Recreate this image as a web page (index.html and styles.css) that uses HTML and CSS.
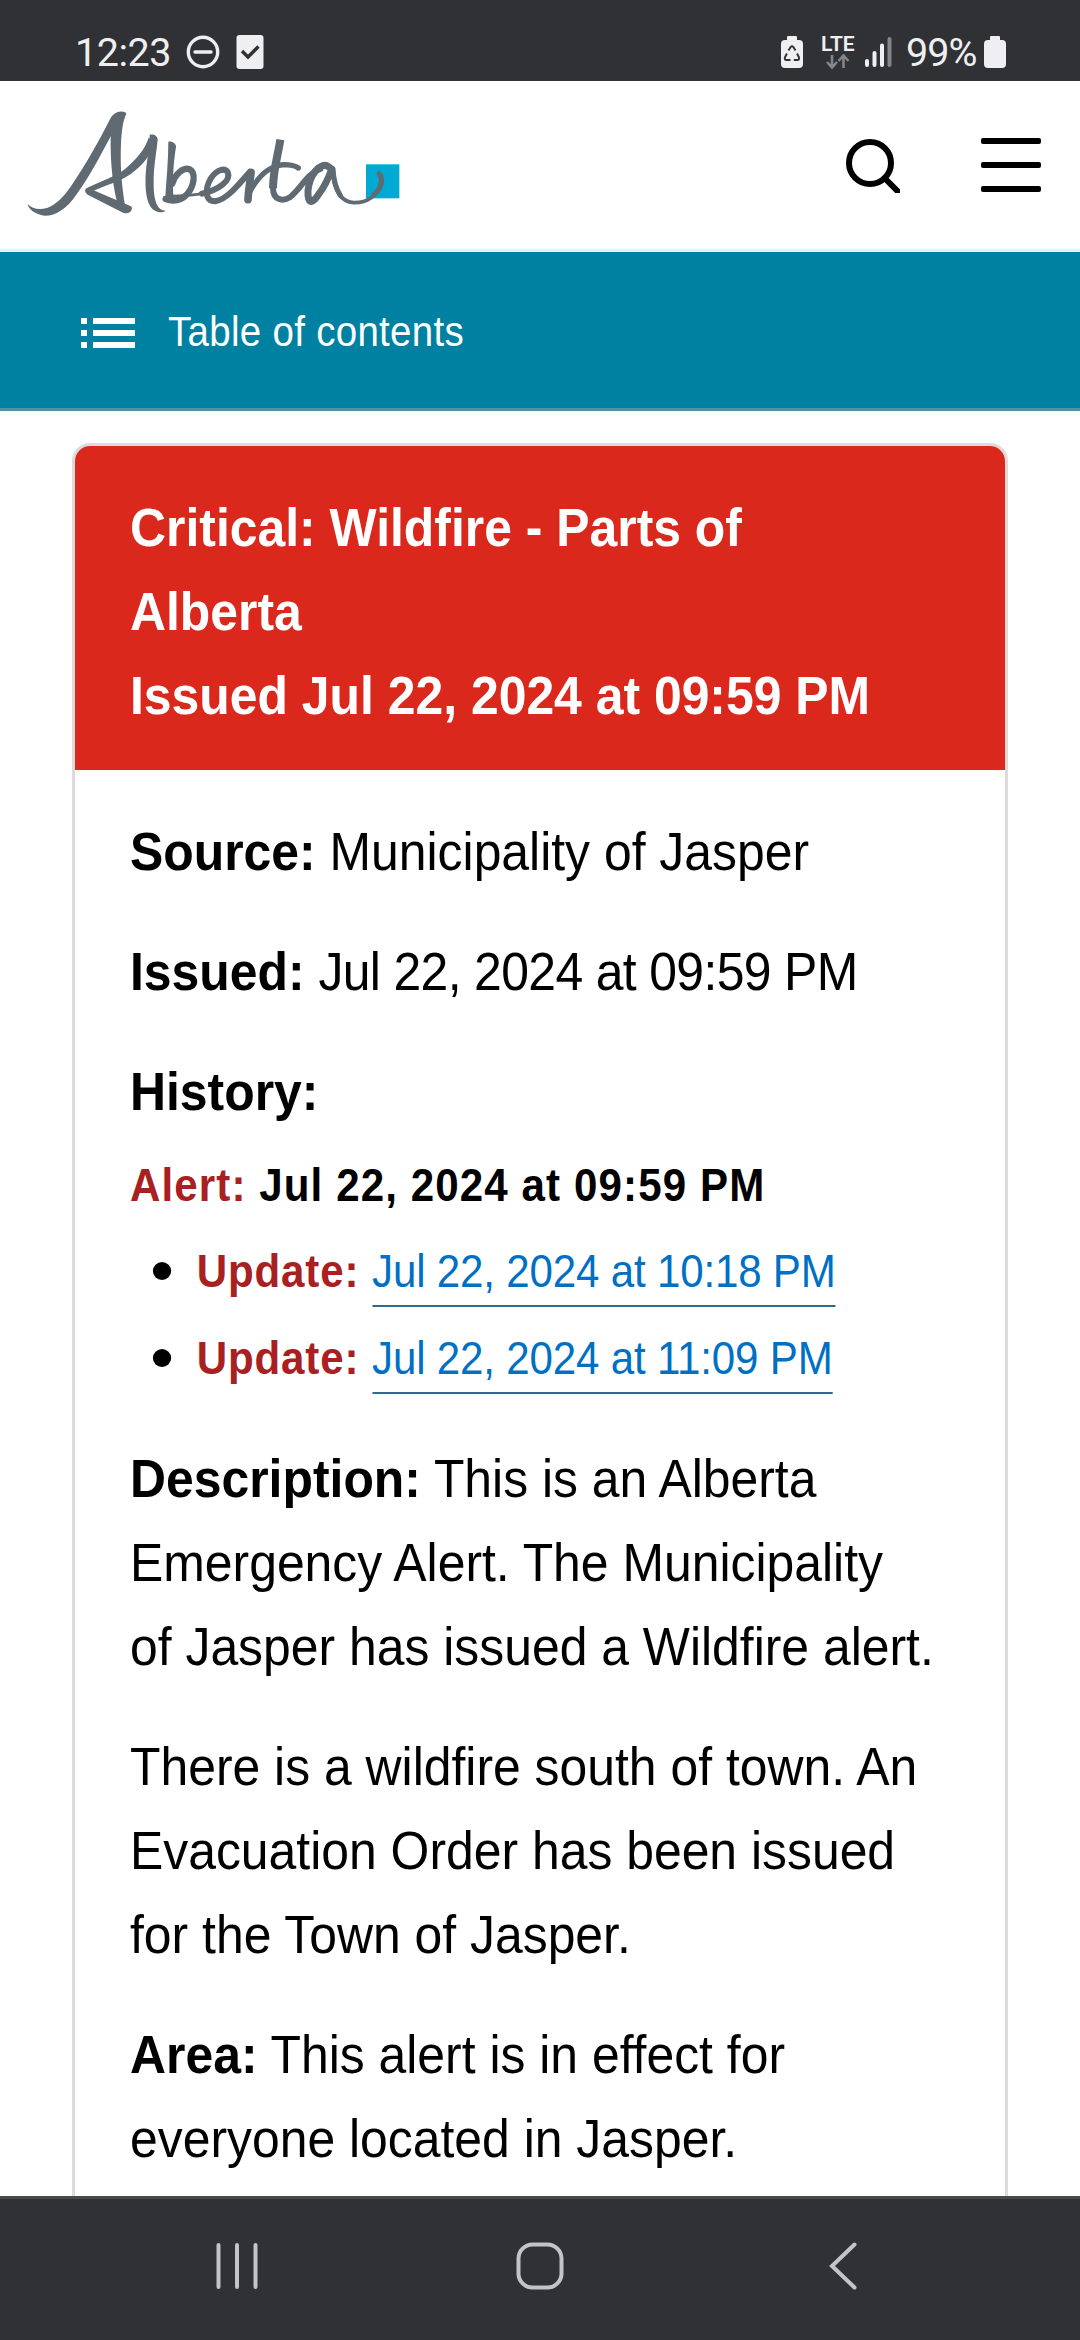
FILE: index.html
```html
<!DOCTYPE html>
<html lang="en">

<head>
    <meta charset="UTF-8">
    <title>Alberta Emergency Alert</title>
    <link rel="stylesheet" href="styles.css">
</head>

<body>
    <div class="status-bar">
        <div class="status-left">
            <span class="clock">12:23</span>
            <svg class="dnd" viewBox="0 0 34 34">
                <circle cx="17" cy="17" r="14.7" />
                <path d="M9 17h16" />
            </svg>
            <svg class="task" viewBox="0 0 28 34">
                <rect x="0.5" y="0" width="27" height="34" rx="3" fill="#efeff1" />
                <path d="M6 16l6 6 10.500-10.500" fill="none" stroke="#303134" stroke-width="3.400" />
            </svg>
        </div>
        <div class="status-right">
            <svg class="battery" viewBox="0 0 22 32">
                <path d="M6 1q0-1 1-1h8q1 0 1 1v3h2q4 0 4 4v20q0 4-4 4h-14q-4 0-4-4v-20q0-4 4-4h2z" fill="#efeff1" />
                <g fill="none" stroke="#303134" stroke-width="1.900" stroke-linejoin="round">
                    <path d="M7.500 14.500l2.300-3.700q1.200-1.200 2.400 0l2.300 3.700" />
                    <path d="M16 17.500l2 4q.5 2.500-1.700 2.500h-3.500" />
                    <path d="M9.500 24h-4q-2.200 0-1.600-2.500l2-4" />
                </g>
            </svg>
            <div class="network">
                <span>LTE</span>
                <svg viewBox="0 0 24 15">
                    <path d="M6 1v12M1 8l5 5.500 5-5.500M17.500 14v-12M12.500 7l5-5.500 5 5.500" />
                </svg>
            </div>
            <svg class="signal" viewBox="0 0 28 32">
                <path d="M3 25v4M10.500 17v12M18 9.500v19.500" stroke="#efeff1" />
                <path d="M25.500 3v26" stroke="#85868a" />
            </svg>
            <span class="percent">99%</span>
            <svg class="battery" viewBox="0 0 22 32">
                <path d="M6 1q0-1 1-1h8q1 0 1 1v3h2q4 0 4 4v20q0 4-4 4h-14q-4 0-4-4v-20q0-4 4-4h2z" fill="#efeff1" />
            </svg>
        </div>
    </div>

    <div class="header">
        <svg class="logo" viewBox="20 20 1130 330">
            <rect x="1037" y="192" width="100" height="102" fill="#00aad2" />
            <g fill="#5f6a72">
                <path d="M22 312C36 326 58 330 82 322C108 312 128 292 152 258C200 185 240 115 268 58C280 35 300 28 318 38C300 70 275 100 272 106C240 165 210 225 170 280C140 325 105 347 72 346C45 342 25 328 22 312Z" />
                <path d="M272 80C285 40 300 30 318 40C308 60 304 90 302 130C299 190 303 250 314 316L290 306C274 240 268 160 272 80Z" />
                <path d="M194 268C194 278 200 282 208 286L308 337C330 345 340 325 332 318L216 268Z" />
                <path d="M194 266C240 242 280 232 315 205C350 175 372 150 386 110L398 140C385 175 360 200 330 222C290 250 240 258 210 278Z" />
                <path d="M388 103C400 100 412 106 412 118C408 160 399 200 400 250C400 300 410 330 436 331C425 340 400 338 388 315C370 280 374 210 384 160C387 140 388 120 388 103Z" />
                <path d="M444 124C455 121 468 130 467 140C460 180 455 240 460 300L434 302C438 240 444 180 444 124Z" />
            </g>
            <g fill="none" stroke="#5f6a72" stroke-linecap="round">
                <path d="M456 250C466 218 490 202 506 206C530 216 520 260 500 282C484 301 458 305 436 296" stroke-width="19" />
                <path d="M432 292C450 284 510 290 560 276" stroke-width="9" />
                <path d="M545 280C592 270 634 242 622 215C610 199 580 212 565 247C550 284 564 306 588 302C622 296 658 248 688 215" stroke-width="18" />
                <path d="M692 216C690 240 684 270 683 298" stroke-width="23" />
                <path d="M688 275C715 225 750 196 790 193C812 193 826 197 834 203" stroke-width="16" />
                <path d="M758 262C758 298 785 306 810 290C842 264 862 218 900 206" stroke-width="18" />
                <path d="M780 118C774 160 758 210 758 264" stroke-width="24" stroke-linecap="butt" />
                <path d="M926 200C900 180 868 225 863 270C861 310 874 312 892 286C912 260 924 236 934 206" stroke-width="21" />
                <path d="M934 200C938 255 952 304 1000 307C1040 308 1074 286 1080 250" stroke-width="11" />
                <path d="M938 206C940 245 950 270 960 285M1060 283C1090 260 1086 230 1076 220" stroke-width="15" />
            </g>
        </svg>
        <div class="header-icons">
            <svg class="search" viewBox="0 0 56 56">
                <circle cx="26" cy="26" r="21" />
                <path d="M40.500 41l13 13" />
            </svg>
            <div class="menu"><i></i><i></i><i></i></div>
        </div>
    </div>

    <div class="toc">
        <svg class="toc-icon" viewBox="0 0 54 30">
            <path d="M0 0h6v6h-6zM12 0h42v6h-42zM0 12h6v6h-6zM12 12h42v6h-42zM0 24h6v6h-6zM12 24h42v6h-42z" />
        </svg>
        <span class="narrow">Table of contents</span>
    </div>

    <div class="content">
        <div class="alert-card">
            <div class="alert-title">
                <div class="narrow">Critical: Wildfire - Parts of Alberta<br>Issued Jul 22, 2024 at 09:59 PM</div>
            </div>
            <div class="alert-body">
                <div class="narrow">
                    <p><b>Source:</b> Municipality of Jasper</p>
                    <p><b>Issued:</b> <span class="date">Jul 22, 2024 at 09:59 PM</span></p>
                    <p><b>History:</b></p>
                    <div class="history">
                        <div class="history-first"><span class="red">Alert:</span> Jul 22, 2024 at 09:59 PM</div>
                        <ul>
                            <li><b class="red">Update:</b> <a href="#">Jul 22, 2024 at 10:18 PM</a></li>
                            <li><b class="red">Update:</b> <a href="#">Jul 22, 2024 at 11:09 PM</a></li>
                        </ul>
                    </div>
                    <p><b>Description:</b> This is an Alberta Emergency Alert. The Municipality of Jasper has issued a Wildfire alert.</p>
                    <p>There is a wildfire south of town. An Evacuation Order has been issued for the Town of Jasper.</p>
                    <p><b>Area:</b> This alert is in effect for everyone located in Jasper.</p>
                </div>
            </div>
        </div>
    </div>

    <div class="nav-bar">
        <svg viewBox="0 0 48 48">
            <path d="M5.500 3v42M24 3v42M42.500 3v42" />
        </svg>
        <svg viewBox="0 0 48 48">
            <rect x="2.500" y="2.500" width="43" height="43" rx="14" />
        </svg>
        <svg viewBox="0 0 48 48">
            <path d="M35.500 2.500L13 24l22.500 21.500" />
        </svg>
    </div>
</body>

</html>
```
FILE: styles.css
```css
* {
    box-sizing: border-box;
}

body {
    margin: 0;
    height: 2340px;
    display: flex;
    flex-direction: column;
    overflow: hidden;
    background-color: #fff;
    color: #000;
    font-family: "Liberation Sans", Arial, sans-serif;
}

svg {
    display: block;
    flex: none;
}

/* squeezes the text to a semi-condensed width */
.narrow {
    transform: scaleX(0.915);
    transform-origin: 0 0;
}

.status-bar {
    flex: none;
    height: 81px;
    padding: 24px 74px 0 75px;
    display: flex;
    justify-content: space-between;
    background-color: #303134;
    color: #efeff1;
    font-family: Roboto, sans-serif;
    font-size: 39.5px;
}

.status-left,
.status-right {
    height: 56px;
    display: flex;
    align-items: center;
}

.clock {
    width: 111px;
    letter-spacing: -0.5px;
}

.dnd {
    width: 34px;
    height: 34px;
    fill: none;
    stroke: #efeff1;
    stroke-width: 3.4;
    stroke-linecap: round;
}

.task {
    width: 28px;
    height: 34px;
    margin-left: 16px;
}

.battery {
    width: 22px;
    height: 32px;
}

.network {
    width: 33px;
    margin: 0 10px 0 18px;
    font-size: 21px;
    font-weight: 600;
    line-height: 17px;
}

.network svg {
    width: 24px;
    height: 15px;
    margin: 1px 0 0 5px;
    fill: none;
    stroke: #85868a;
    stroke-width: 2.6;
}

.signal {
    width: 28px;
    height: 32px;
    stroke-width: 4;
    stroke-linecap: round;
}

.percent {
    width: 78px;
    margin-left: 14px;
    letter-spacing: -1px;
}

.header {
    flex: none;
    height: 171px;
    padding: 0 39px 0 27px;
    display: flex;
    justify-content: space-between;
    align-items: center;
    border-bottom: 3px solid #e3f2f6;
}

.logo {
    width: 376.7px;
    height: 110px;
    margin-bottom: 6px;
}

.header-icons {
    display: flex;
    align-items: center;
    gap: 81px;
}

.search {
    width: 56px;
    height: 56px;
    fill: none;
    stroke: #000;
    stroke-width: 6;
    stroke-linecap: round;
}

.menu {
    width: 60px;
    display: flex;
    flex-direction: column;
    gap: 18px;
}

.menu i {
    height: 6px;
    border-radius: 2px;
    background-color: #000;
}

.toc {
    flex: none;
    height: 159px;
    padding-left: 81px;
    display: flex;
    align-items: center;
    gap: 33px;
    background-color: #0081a2;
    border-bottom: 3px solid #5290aa;
    color: #fff;
    font-size: 42px;
    letter-spacing: 0.35px;
}

.toc .narrow {
    padding-top: 4px;
}

.toc-icon {
    width: 54px;
    height: 30px;
    margin-top: 6px;
    fill: #fff;
}

.content {
    flex: 1;
    min-height: 0;
    padding: 32px 72px 0;
    overflow: hidden;
}

.alert-card {
    height: 1900px;
    border: 3px solid #dcdcdc;
    border-radius: 18px;
    overflow: hidden;
    font-size: 54.5px;
    line-height: 84px;
}

.alert-title {
    height: 324px;
    padding: 40px 55px 0;
    background-color: #da291c;
    color: #fff;
    font-weight: bold;
}

.alert-title .narrow {
    width: 840px;
}

.alert-body {
    padding: 40px 55px 0;
}

.alert-body .narrow {
    width: 880px;
}

.alert-body p {
    margin: 0 0 36px;
}

.date {
    letter-spacing: -0.7px;
}

.history {
    margin: -21px 0 43px;
    font-size: 46px;
    line-height: 72px;
}

.history-first {
    font-weight: bold;
    letter-spacing: 1.2px;
}

.history ul {
    margin: 14px 0 0;
    padding: 0;
    list-style: none;
}

.history li {
    display: flex;
    gap: 14px;
    height: 72px;
    margin-bottom: 15px;
    padding-left: 25px;
}

.history li::before {
    content: "";
    align-self: center;
    width: 20px;
    height: 18px;
    margin-right: 14px;
    border-radius: 50%;
    background-color: #000;
}

.history li b {
    letter-spacing: 0.9px;
}

.history a {
    height: 72px;
    color: #0070c4;
    text-decoration: none;
    letter-spacing: -0.2px;
    border-bottom: 2px solid #2b6c93;
}

.red {
    color: #a8201f;
}

.nav-bar {
    flex: none;
    height: 144px;
    padding: 0 213px 8px;
    display: flex;
    justify-content: space-between;
    align-items: center;
    background-color: #303134;
    border-top: 3px solid #48494b;
}

.nav-bar svg {
    width: 48px;
    height: 48px;
    fill: none;
    stroke: #c3c4c6;
    stroke-width: 4;
    stroke-linecap: round;
}
```
